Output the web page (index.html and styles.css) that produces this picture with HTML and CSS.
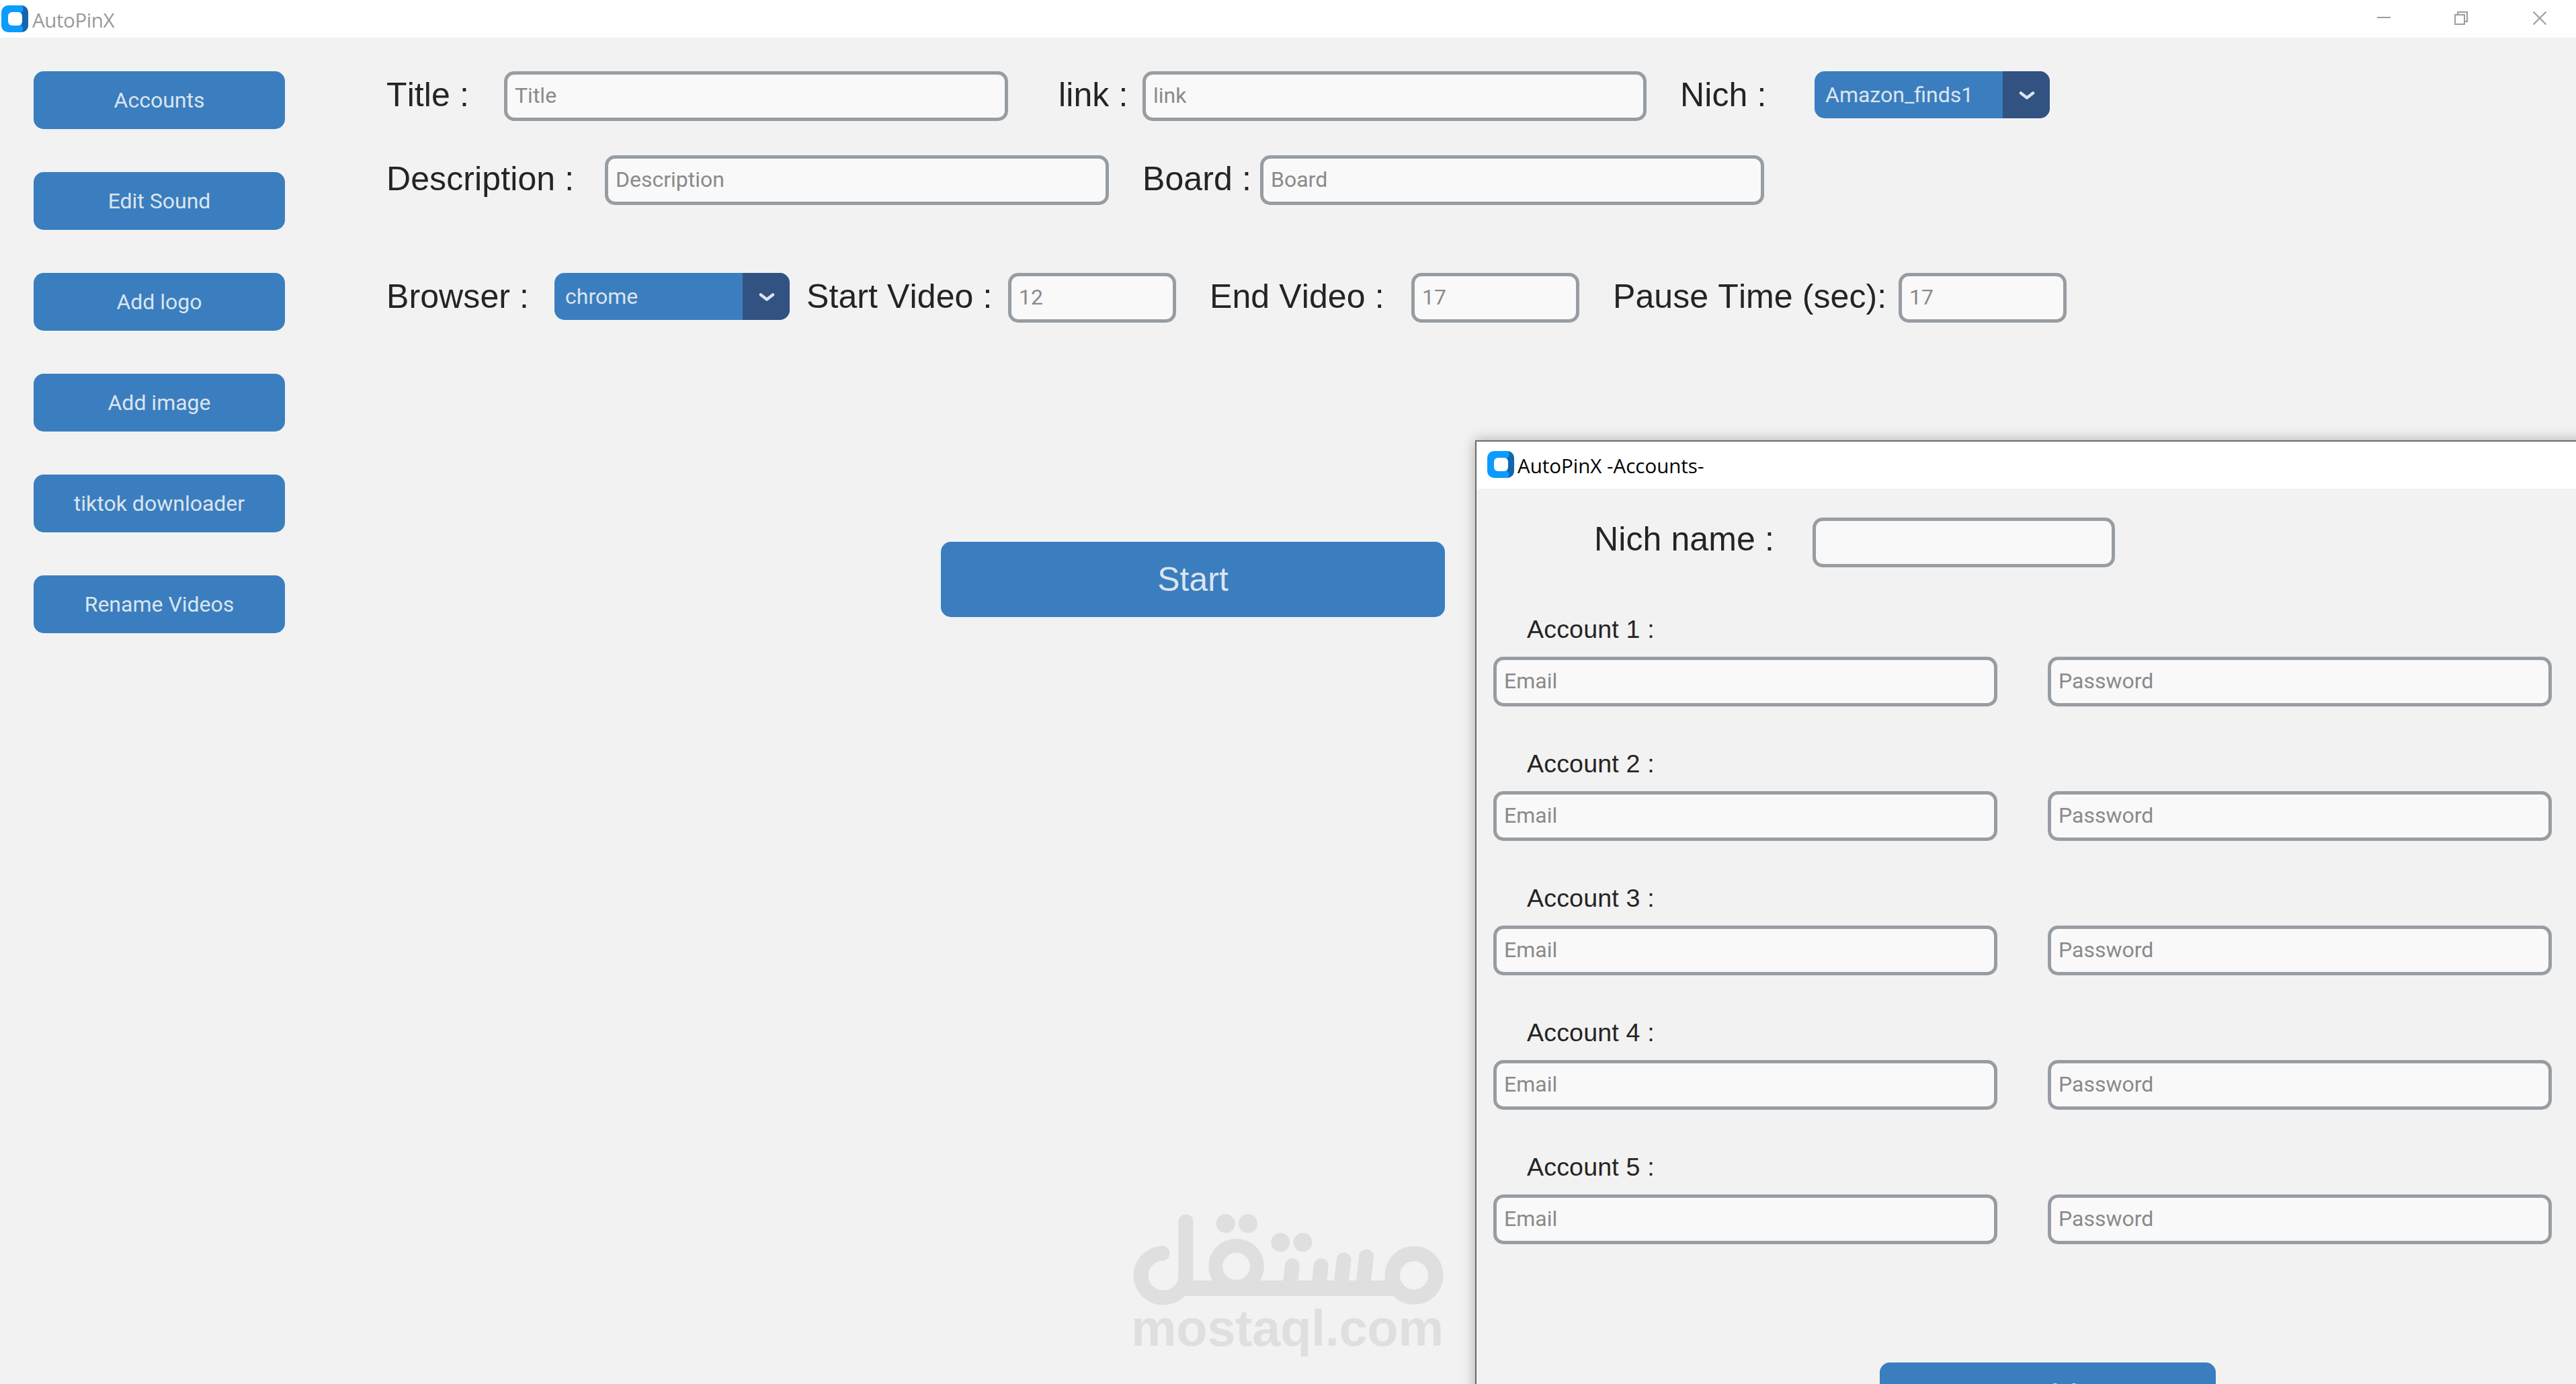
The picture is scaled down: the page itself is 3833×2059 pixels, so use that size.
FILE: index.html
```html
<!DOCTYPE html>
<html lang="en">
<head>
<meta charset="utf-8">
<title>AutoPinX</title>
<link rel="stylesheet" href="styles.css">
</head>
<body>
<svg class="defs" width="0" height="0" aria-hidden="true">
  <symbol id="app-icon" viewBox="0 0 40 40">
    <path fill="#1266b0" d="M24 0h6a10 10 0 0 1 10 10v20a10 10 0 0 1-10 10h-6z"/>
    <path fill="#0b9cfe" d="M10 0h20c4 3 3 8 0 10v20c3 3 3 7 0 10H10A10 10 0 0 1 0 30V10A10 10 0 0 1 10 0z"/>
    <rect x="10" y="10" width="21" height="20" rx="6" fill="#fff"/>
  </symbol>
  <symbol id="chevron" viewBox="0 0 24 14">
    <path d="M3 3.500l9 7 9-7" fill="none" stroke="#dce4ee" stroke-width="4.500" stroke-linecap="round" stroke-linejoin="round"/>
  </symbol>
</svg>

<header class="titlebar">
  <svg class="app-icon"><use href="#app-icon"/></svg>
  <span class="titlebar-text">AutoPinX</span>
  <div class="window-controls">
    <svg width="20" height="20"><path d="M0 9h20" stroke="#979da2" stroke-width="2"/></svg>
    <svg width="20" height="20" fill="none" stroke="#979da2" stroke-width="2"><path d="M1 5h14v14H1zM5 5V1h14v14h-4"/></svg>
    <svg width="20" height="20"><path d="M.5.5l19 19M19.500.5l-19 19" stroke="#979da2" stroke-width="2"/></svg>
  </div>
</header>

<div class="app">
  <nav class="sidebar">
    <button class="btn">Accounts</button>
    <button class="btn">Edit Sound</button>
    <button class="btn">Add logo</button>
    <button class="btn">Add image</button>
    <button class="btn">tiktok downloader</button>
    <button class="btn">Rename Videos</button>
  </nav>

  <main class="form">
    <div class="row row-title">
      <label class="label">Title :</label><div class="field">Title</div>
      <label class="label">link :</label><div class="field">link</div>
      <label class="label">Nich :</label>
      <div class="combo"><span class="combo-value">Amazon_finds1</span><span class="combo-arrow"><svg class="chevron"><use href="#chevron"/></svg></span></div>
    </div>
    <div class="row row-description">
      <label class="label">Description :</label><div class="field">Description</div>
      <label class="label">Board :</label><div class="field">Board</div>
    </div>
    <div class="row row-browser">
      <label class="label">Browser :</label>
      <div class="combo"><span class="combo-value">chrome</span><span class="combo-arrow"><svg class="chevron"><use href="#chevron"/></svg></span></div>
      <label class="label">Start Video :</label><div class="field">12</div>
      <label class="label">End Video :</label><div class="field">17</div>
      <label class="label">Pause Time (sec):</label><div class="field">17</div>
    </div>
    <button class="btn btn-start">Start</button>
  </main>
</div>

<svg class="watermark" viewBox="0 0 560 289">
  <g fill="none" stroke="#dfdfdf" stroke-width="22" stroke-linecap="round">
    <circle cx="464" cy="127.400" r="32.300" stroke-width="22.500"/>
    <path d="M118 146.500H440" stroke-width="23" stroke-linecap="butt"/>
    <circle cx="199.600" cy="114" r="30.800" stroke-width="21"/>
    <path d="M282.800 113L279.300 144M325.600 113L322.300 144M359.600 104.500L355 144M393 99.500L388 144"/>
    <path d="M124.500 47.500V127.400A33.500 33 0 1 1 89.500 94.600"/>
    <path d="M124.500 120L123.500 140" stroke-linecap="butt"/>
  </g>
  <g fill="#dfdfdf">
    <circle cx="183.800" cy="50.300" r="14"/>
    <circle cx="217" cy="50.300" r="14"/>
    <circle cx="265.300" cy="78.300" r="14"/>
    <circle cx="298.500" cy="78.300" r="14"/>
    <text class="watermark-text" x="43" y="232" textLength="465">mostaql.com</text>
  </g>
</svg>

<section class="dialog">
  <header class="dialog-titlebar">
    <svg class="app-icon"><use href="#app-icon"/></svg>
    <span class="titlebar-text">AutoPinX -Accounts-</span>
  </header>
  <div class="dialog-body">
    <div class="nich-row"><label class="label">Nich name :</label><div class="field"></div></div>
    <div class="account">
      <label class="account-label">Account 1 :</label>
      <div class="account-fields"><div class="field">Email</div><div class="field">Password</div></div>
    </div>
    <div class="account">
      <label class="account-label">Account 2 :</label>
      <div class="account-fields"><div class="field">Email</div><div class="field">Password</div></div>
    </div>
    <div class="account">
      <label class="account-label">Account 3 :</label>
      <div class="account-fields"><div class="field">Email</div><div class="field">Password</div></div>
    </div>
    <div class="account">
      <label class="account-label">Account 4 :</label>
      <div class="account-fields"><div class="field">Email</div><div class="field">Password</div></div>
    </div>
    <div class="account">
      <label class="account-label">Account 5 :</label>
      <div class="account-fields"><div class="field">Email</div><div class="field">Password</div></div>
    </div>
    <button class="btn btn-add">Add</button>
  </div>
</section>
</body>
</html>
```
FILE: styles.css
```css
* { box-sizing: border-box; }

body {
  margin: 0;
  width: 3833px;
  height: 2059px;
  overflow: hidden;
  position: relative;
  background: #f2f2f2;
  color: #242424;
  font-family: Roboto, sans-serif;
  font-size: 32px;
}

.defs { position: absolute; }

/* Main window title bar */
.titlebar {
  display: flex;
  align-items: center;
  height: 56px;
  padding-left: 2px;
  background: #fff;
  color: #999;
}
.app-icon { width: 40px; height: 40px; flex: none; }
.titlebar-text {
  margin-left: 6px;
  padding-top: 3px;
  font-family: "Open Sans", sans-serif;
  font-size: 29.5px;
  line-height: 40px;
  letter-spacing: -0.4px;
  white-space: nowrap;
}
.window-controls {
  display: flex;
  gap: 95px;
  margin-left: auto;
  padding: 0 44px 2px 0;
}
.window-controls svg { display: block; }
.window-controls svg:last-child { margin-left: 2px; }

.app { display: flex; padding: 50px 50px 0; }

.btn {
  display: flex;
  align-items: center;
  justify-content: center;
  width: 375px;
  height: 86px;
  padding: 0;
  border: 0;
  border-radius: 15px;
  background: #3a7ebf;
  color: #dce4ee;
  font: 32px/38px Roboto, sans-serif;
}

.sidebar { display: flex; flex-direction: column; gap: 64px; width: 525px; flex: none; }
.sidebar .btn { width: 374px; }

/* Labelled entries */
.row { display: grid; height: 74px; align-items: start; }
.row-title { grid-template-columns: 175px 825px 125px 800px 200px 350px; }
.row-description { grid-template-columns: 325px 800px 175px 750px; margin-top: 51px; }
.row-browser { grid-template-columns: 250px 375px 300px 300px 300px 300px 425px 250px; margin-top: 101px; }

.label {
  font: 50px/70px "Liberation Sans", Arial, sans-serif;
  font-kerning: none;
  letter-spacing: 0.1px;
  white-space: nowrap;
}
.field {
  width: 750px;
  height: 74px;
  padding: 0 12px 0 11px;
  border: 5px solid #979da2;
  border-radius: 15px;
  background: #f9f9fa;
  color: #8a8a8a;
  line-height: 62px;
}
.row-browser .field { width: 250px; }

.combo {
  display: flex;
  width: 350px;
  height: 70px;
  border-radius: 15px;
  overflow: hidden;
  background: #3a7ebf;
  color: #dce4ee;
  line-height: 70px;
}
.combo-value { width: 280px; padding-left: 16px; }
.combo-arrow {
  display: flex;
  align-items: center;
  justify-content: center;
  width: 70px;
  padding: 2px 0 0 1px;
  background: #325282;
}
.chevron { width: 24px; height: 14px; }

.btn-start {
  width: 750px;
  height: 112px;
  margin: 326px 0 0 825px;
  font: 50px/60px "Liberation Sans", Arial, sans-serif;
}

.watermark {
  position: absolute;
  left: 1640px;
  top: 1770px;
  width: 560px;
  height: 289px;
}
.watermark-text { font: bold 76px "Liberation Sans", Arial, sans-serif; }

/* Accounts window floating over the main one */
.dialog {
  position: absolute;
  left: 2195px;
  top: 655px;
  width: 1700px;
  height: 1500px;
  border: 2px solid #6b6b6b;
  background: #f2f2f2;
  box-shadow: 0 0 18px rgba(0, 0, 0, 0.3);
}
.dialog-titlebar {
  display: flex;
  align-items: center;
  height: 70px;
  padding: 0 0 2px 16px;
  background: #fff;
  color: #000;
}
.dialog-titlebar .titlebar-text { margin-left: 5px; letter-spacing: 0; }
.dialog-body { padding-left: 25px; }
.nich-row { display: flex; padding: 43px 0 0 150px; height: 207px; }
.nich-row .label { width: 325px; line-height: 64px; }
.nich-row .field { width: 450px; }
.account { height: 200px; }
.account-label {
  display: block;
  height: 43px;
  padding-left: 50px;
  font: 37.5px/43px "Liberation Sans", Arial, sans-serif;
  font-kerning: none;
  letter-spacing: 0.2px;
  transform: translateY(-19px);
}
.account-fields { display: flex; gap: 75px; }
.btn-add {
  width: 500px;
  height: 100px;
  margin: 93px 0 0 575px;
  font: 50px/60px "Liberation Sans", Arial, sans-serif;
}
```
